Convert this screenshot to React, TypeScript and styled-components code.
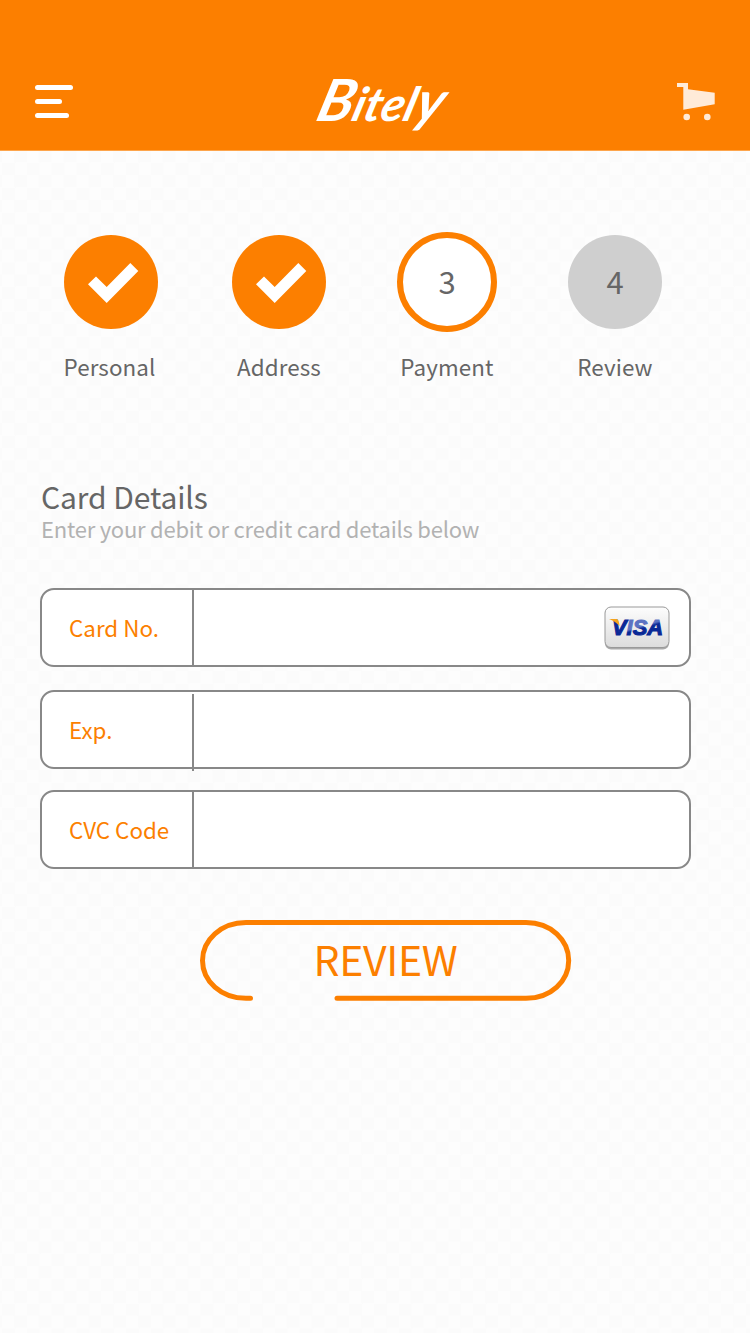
import React from "react";
import styled, { createGlobalStyle } from "styled-components";

const orange = "#fc7f00";

const GlobalStyle = createGlobalStyle`
  body { margin: 0; background: #fff; }
  *, *::before, *::after { box-sizing: border-box; }
`;

const Page = styled.div`
  width: 750px;
  height: 1333px;
  background: repeating-conic-gradient(#fbfbfb 0 25%, #fdfdfd 0 50%) 2px 1.5px / 24.8px 24.8px;
  font-family: "Noto Sans CJK SC", "Noto Sans", sans-serif;
  color: #666;
`;

const Header = styled.header`
  height: 151px;
  padding: 77px 35px 0;
  display: flex;
  justify-content: space-between;
  align-items: flex-start;
  background: ${orange};
  border-bottom: 1px solid #fda54c;
`;

const MenuButton = styled.button`
  width: 100px;
  margin-top: 8px;
  padding: 0;
  border: 0;
  background: none;
  display: flex;
  flex-direction: column;
  gap: 9px;
`;

const MenuLine = styled.span<{ $width: number }>`
  width: ${(p) => p.$width}px;
  height: 5px;
  border-radius: 3px;
  background: #fff;
`;

const Logo = styled.svg`
  width: 150px;
  height: 72px;
  margin-left: 4px;
  overflow: visible;
  font-family: Lato, sans-serif;
  font-style: italic;
  font-weight: 700;
  fill: #fff;
`;

const CartButton = styled.button`
  width: 100px;
  padding: 0;
  margin-top: 5px;
  border: 0;
  background: none;
  display: flex;
  justify-content: flex-end;
`;

const Steps = styled.ol`
  list-style: none;
  margin: 0;
  padding: 81px 0 0 27px;
  display: flex;
`;

const Step = styled.li`
  width: 168px;
  display: flex;
  flex-direction: column;
  align-items: center;
`;

const CircleSlot = styled.div`
  height: 100px;
  display: flex;
  align-items: center;
`;

type StepState = "done" | "current" | "todo";

const Circle = styled.div<{ $state: StepState }>`
  width: ${(p) => (p.$state === "current" ? 100 : 94.5)}px;
  height: ${(p) => (p.$state === "current" ? 100 : 94.5)}px;
  border-radius: 50%;
  border: ${(p) => (p.$state === "current" ? `6px solid ${orange}` : "0")};
  background: ${(p) => (p.$state === "done" ? orange : p.$state === "current" ? "#fff" : "rgba(196,196,196,.82)")};
  display: flex;
  align-items: center;
  justify-content: center;
`;

const StepNumber = styled.span`
  padding-bottom: 2px;
  font-size: 31px;
  line-height: 40px;
`;

const StepLabel = styled.span<{ $shift: number }>`
  margin-top: 17px;
  padding-right: ${(p) => p.$shift}px;
  font-size: 22.4px;
  line-height: 34px;
  letter-spacing: 0.1px;
`;

const Form = styled.form`
  padding: 93px 59px 0 40px;
`;

const Title = styled.h1`
  margin: 0 0 0 1px;
  font-size: 30px;
  font-weight: 400;
  line-height: 40px;
  letter-spacing: -0.1px;
`;

const Hint = styled.p`
  margin: -3px 0 0 1px;
  font-size: 22px;
  line-height: 30px;
  letter-spacing: -0.22px;
  color: #b2b2b2;
`;

const Field = styled.label<{ $gap: number }>`
  height: 79px;
  margin-top: ${(p) => p.$gap}px;
  display: flex;
  align-items: stretch;
  background: #fff;
  border: 2px solid #888;
  border-radius: 14px;
`;

const FieldLabel = styled.span<{ $drop?: number }>`
  width: 152px;
  padding-left: 27px;
  display: flex;
  align-items: center;
  color: ${orange};
  font-size: 22.4px;
  background: linear-gradient(#888, #888) right 0 top ${(p) => p.$drop ?? 0}px / 2px 100% no-repeat;
  margin-bottom: ${(p) => (p.$drop ? -4 : 0)}px;
  padding-bottom: ${(p) => (p.$drop ? 5 : 1)}px;
`;

const FieldValue = styled.span`
  flex: 1;
  padding: 16px 19px 0 0;
  display: flex;
  justify-content: flex-end;
`;

const ReviewButton = styled.button`
  display: grid;
  width: 372px;
  height: 81px;
  margin: 51px 0 0 160px;
  padding: 0;
  border: 0;
  background: none;
  color: ${orange};
  font-family: inherit;
  font-size: 41px;

  > * { grid-area: 1 / 1; }
`;

const ReviewText = styled.span`
  align-self: center;
  justify-self: center;
  padding: 0 1px 5px 0;
  line-height: 60px;
  letter-spacing: -0.3px;
`;

const CheckMark = () => (
  <svg width="94" height="94" viewBox="0 0 94 94">
    <path d="M24 49.3 32 41.5 42.7 52.1 66.3 28 74.3 36 42.7 68Z" fill="#fff" />
  </svg>
);

const VisaCard = () => (
  <svg width="66" height="44" viewBox="0 0 66 44">
    <defs>
      <linearGradient id="plate" x1="0" y1="0" x2="0" y2="1">
        <stop offset="0" stopColor="#fdfdfd" />
        <stop offset="1" stopColor="#dcdcdc" />
      </linearGradient>
      <linearGradient id="ink" gradientUnits="userSpaceOnUse" x1="30" y1="16" x2="34" y2="30">
        <stop offset="0.42" stopColor="#5b72c2" />
        <stop offset="0.58" stopColor="#0a2896" />
      </linearGradient>
    </defs>
    <rect x="1" y="2" width="64" height="41.5" rx="6" fill="#aaa" />
    <rect x="1" y="1" width="64" height="40.5" rx="6" fill="url(#plate)" stroke="#999" />
    <text
      x="8"
      y="29"
      textLength="51"
      lengthAdjust="spacingAndGlyphs"
      fontFamily="Liberation Sans, sans-serif"
      fontWeight="700"
      fontStyle="italic"
      fontSize="22"
      fill="url(#ink)"
      stroke="url(#ink)"
      strokeWidth="1.1"
    >
      <tspan fill="#0a2896" stroke="#0a2896">V</tspan>ISA
    </text>
    <path d="M5 13H12.5Q15 13.2 15.5 20Q11 15 5 13Z" fill="#f5a31c" />
  </svg>
);

const steps: { label: string; state: StepState; shift: number }[] = [
  { label: "Personal", state: "done", shift: 3 },
  { label: "Address", state: "done", shift: 0 },
  { label: "Payment", state: "current", shift: 0 },
  { label: "Review", state: "todo", shift: 0 },
];

export default function App() {
  return (
    <>
      <GlobalStyle />
      <Page>
        <Header>
          <MenuButton type="button" aria-label="Menu">
            <MenuLine $width={38} />
            <MenuLine $width={27} />
            <MenuLine $width={34} />
          </MenuButton>
          <Logo viewBox="0 0 150 72">
            <text transform="translate(12 44) skewX(-16)" textLength="126" lengthAdjust="spacingAndGlyphs" fontSize="47">
              <tspan fontSize="58">B</tspan>itel<tspan fontSize="56">y</tspan>
            </text>
          </Logo>
          <CartButton type="button" aria-label="Cart">
            <svg width="38" height="40" viewBox="0 0 38 40" fill="#ffebd8">
              <path d="M0 1H11V7.3L37.7 10.7V22.3L6.3 27.7V5H0Z" />
              <circle cx="9.7" cy="35" r="3.3" />
              <circle cx="30.3" cy="35" r="3.3" />
            </svg>
          </CartButton>
        </Header>
        <Steps>
          {steps.map((s, i) => (
            <Step key={s.label}>
              <CircleSlot>
                <Circle $state={s.state}>
                  {s.state === "done" ? <CheckMark /> : <StepNumber>{i + 1}</StepNumber>}
                </Circle>
              </CircleSlot>
              <StepLabel $shift={s.shift}>{s.label}</StepLabel>
            </Step>
          ))}
        </Steps>
        <Form>
          <Title>Card Details</Title>
          <Hint>Enter your debit or credit card details below</Hint>
          <Field $gap={45}>
            <FieldLabel>Card No.</FieldLabel>
            <FieldValue><VisaCard /></FieldValue>
          </Field>
          <Field $gap={23}>
            <FieldLabel $drop={2}>Exp.</FieldLabel>
          </Field>
          <Field $gap={21}>
            <FieldLabel>CVC Code</FieldLabel>
          </Field>
          <ReviewButton type="button">
            <svg width="372" height="81" viewBox="0 0 372 81" fill="none" stroke={orange} strokeWidth="5" strokeLinecap="round">
              <path d="M50.5 78.3H46C21 78.3 2.5 61 2.5 40.5S21 2.5 46 2.5H326C351 2.5 368.7 20 368.7 40.5S351 78.3 326 78.3H137" />
            </svg>
            <ReviewText>REVIEW</ReviewText>
          </ReviewButton>
        </Form>
      </Page>
    </>
  );
}
